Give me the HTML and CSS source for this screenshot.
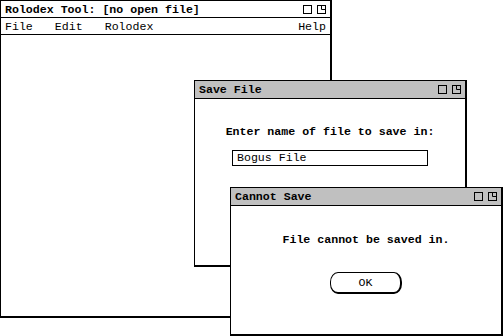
FILE: index.html
```html
<!DOCTYPE html>
<html lang="en">
<head>
  <meta charset="UTF-8">
  <title>Rolodex Tool</title>
  <link rel="stylesheet" href="styles.css">
</head>
<body>
  <div class="window main-window">
    <div class="title-bar">
      <span class="title">Rolodex Tool: [no open file]</span>
      <span class="controls">
        <svg width="9" height="9" viewBox="0 0 9 9"><rect x="0.5" y="0.5" width="8" height="8" fill="none" stroke="#000"/></svg>
        <svg width="9" height="9" viewBox="0 0 9 9"><rect x="0.5" y="0.5" width="8" height="8" fill="none" stroke="#000"/><path d="M4.5 0.5V4.5H8.5" fill="none" stroke="#000"/></svg>
      </span>
    </div>
    <div class="menu-bar">
      <span class="menu-item">File</span>
      <span class="menu-item">Edit</span>
      <span class="menu-item">Rolodex</span>
      <span class="menu-help">Help</span>
    </div>
  </div>

  <div class="window save-window">
    <div class="title-bar">
      <span class="title">Save File</span>
      <span class="controls">
        <svg width="9" height="9" viewBox="0 0 9 9"><rect x="0.5" y="0.5" width="8" height="8" fill="none" stroke="#000"/></svg>
        <svg width="9" height="9" viewBox="0 0 9 9"><rect x="0.5" y="0.5" width="8" height="8" fill="none" stroke="#000"/><path d="M4.5 0.5V4.5H8.5" fill="none" stroke="#000"/></svg>
      </span>
    </div>
    <div class="dialog-body">
      <div class="prompt">Enter name of file to save in:</div>
      <div class="text-field">Bogus File</div>
    </div>
  </div>

  <div class="window error-window">
    <div class="title-bar">
      <span class="title">Cannot Save</span>
      <span class="controls">
        <svg width="9" height="9" viewBox="0 0 9 9"><rect x="0.5" y="0.5" width="8" height="8" fill="none" stroke="#000"/></svg>
        <svg width="9" height="9" viewBox="0 0 9 9"><rect x="0.5" y="0.5" width="8" height="8" fill="none" stroke="#000"/><path d="M4.5 0.5V4.5H8.5" fill="none" stroke="#000"/></svg>
      </span>
    </div>
    <div class="dialog-body error-body">
      <div class="prompt">File cannot be saved in.</div>
      <button class="ok-button">OK</button>
    </div>
  </div>
</body>
</html>
```

FILE: styles.css
```css
body {
  margin: 0;
  width: 503px;
  height: 336px;
  position: relative;
  overflow: hidden;
  background: white;
  font-family: 'Liberation Mono', 'Courier New', monospace;
  font-size: 11.6px;
  color: black;
}

.window {
  position: absolute;
  box-sizing: border-box;
  background: white;
  border: 1px solid black;
  border-right-width: 2px;
  border-bottom-width: 2px;
  display: flex;
  flex-direction: column;
}

.main-window {
  left: 0;
  top: 0;
  width: 332px;
  height: 318px;
}

.save-window {
  left: 194px;
  top: 80px;
  width: 273px;
  height: 187px;
}

.error-window {
  left: 230px;
  top: 187px;
  width: 273px;
  height: 149px;
}

.title-bar {
  display: flex;
  align-items: center;
  justify-content: space-between;
  height: 16px;
  padding: 0 4px 0 4px;
  border-bottom: 1px solid black;
  background: white;
}

.save-window .title-bar,
.error-window .title-bar {
  background: #c0c0c0;
  height: 17px;
}

.title {
  font-weight: bold;
}

.controls {
  display: flex;
  gap: 5px;
}

.controls svg {
  display: block;
}

.menu-bar {
  display: flex;
  align-items: center;
  height: 16px;
  padding: 0 4px;
  border-bottom: 1px solid black;
}

.menu-item {
  margin-right: 22px;
}

.menu-help {
  margin-left: auto;
}

.dialog-body {
  display: flex;
  flex-direction: column;
  align-items: center;
  padding-top: 26px;
}

.prompt {
  font-weight: bold;
}

.text-field {
  box-sizing: border-box;
  width: 196px;
  height: 16px;
  margin-top: 12px;
  padding: 0 4px;
  border: 1px solid black;
  line-height: 14px;
}

.error-body {
  padding-top: 27px;
}

.ok-button {
  box-sizing: border-box;
  width: 72px;
  height: 22px;
  margin-top: 26px;
  background: white;
  border: 1px solid black;
  border-right-width: 2px;
  border-bottom-width: 2px;
  border-radius: 8px / 10px;
  font-family: 'Liberation Mono', 'Courier New', monospace;
  font-size: 11.6px;
  color: black;
  padding: 0;
}
```
